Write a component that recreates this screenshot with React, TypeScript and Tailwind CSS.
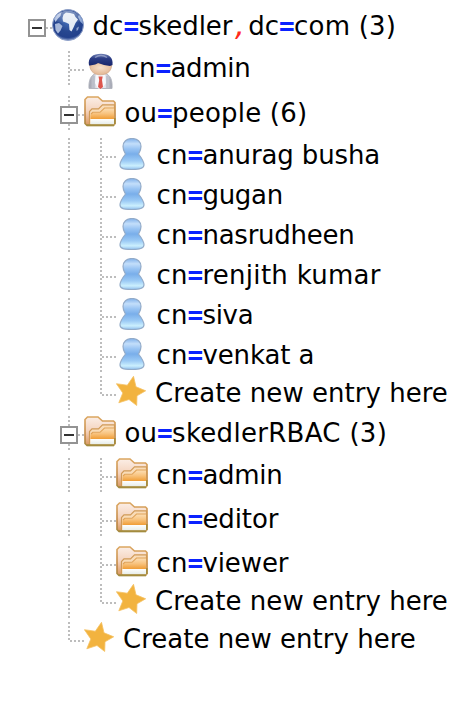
import React from "react";

type Guide = "blank" | "pass" | "branch" | "last" | "rootBox" | "box";
type IconName = "globe" | "person" | "folder" | "user" | "star";

const dots = { stroke: "#bdbdbd", strokeWidth: 2, strokeDasharray: "2 2", fill: "none" };

function GuideCell({ kind }: { kind: Guide }) {
  return (
    <svg className="h-[34px] w-8 shrink-0" viewBox="0 0 32 34">
      {(kind === "pass" || kind === "branch" || kind === "box") && <path d="M17 0V34" {...dots} />}
      {kind === "last" && <path d="M17 0V19" {...dots} />}
      {(kind === "branch" || kind === "last") && <path d="M18 19H32" {...dots} />}
      {(kind === "box" || kind === "rootBox") && (
        <>
          <path d="M26 19H32" {...dots} />
          <rect x="9" y="11" width="16" height="16" fill="#fff" stroke="#939393" strokeWidth="2" />
          <path d="M12 19H22" stroke="#333" strokeWidth="2" />
        </>
      )}
    </svg>
  );
}

function Defs() {
  return (
    <svg className="absolute h-0 w-0">
      <defs>
        <radialGradient id="sea" cx=".5" cy=".35" r=".65">
          <stop offset="0" stopColor="#4a76c0" />
          <stop offset=".55" stopColor="#274790" />
          <stop offset=".85" stopColor="#23418c" />
          <stop offset="1" stopColor="#7d93c4" />
        </radialGradient>
        <linearGradient id="gloss" x1="0" y1="0" x2="0" y2="1">
          <stop offset="0" stopColor="#fff" stopOpacity=".65" />
          <stop offset="1" stopColor="#fff" stopOpacity=".05" />
        </linearGradient>
        <linearGradient id="back" x1="0" y1="0" x2="0" y2="1">
          <stop offset="0" stopColor="#fbeee6" />
          <stop offset=".5" stopColor="#f4d3bd" />
          <stop offset="1" stopColor="#d9965f" />
        </linearGradient>
        <linearGradient id="front" x1="0" y1="0" x2="0" y2="1">
          <stop offset="0" stopColor="#fce0b8" />
          <stop offset=".35" stopColor="#f8c27c" />
          <stop offset=".64" stopColor="#f0a03c" />
          <stop offset=".66" stopColor="#fff" />
          <stop offset="1" stopColor="#e6ece8" />
        </linearGradient>
        <linearGradient id="rim" x1="0" y1="0" x2="0" y2="1">
          <stop offset="0" stopColor="#dba660" />
          <stop offset=".7" stopColor="#c08440" />
          <stop offset="1" stopColor="#a5893f" />
        </linearGradient>
        <linearGradient id="pawn" x1="0" y1="0" x2="0" y2="1">
          <stop offset="0" stopColor="#7fb0ea" />
          <stop offset=".17" stopColor="#c3defa" />
          <stop offset=".32" stopColor="#9cc6f4" />
          <stop offset=".5" stopColor="#79aeea" />
          <stop offset=".72" stopColor="#9bcaf5" />
          <stop offset=".88" stopColor="#cbeffe" />
          <stop offset="1" stopColor="#8fbdec" />
        </linearGradient>
        <linearGradient id="hair" x1="0" y1="0" x2="0" y2="1">
          <stop offset="0" stopColor="#7181b5" />
          <stop offset=".4" stopColor="#2b3c84" />
          <stop offset="1" stopColor="#17256b" />
        </linearGradient>
        <radialGradient id="skin" cx=".5" cy=".4" r=".7">
          <stop offset="0" stopColor="#f6e0cb" />
          <stop offset="1" stopColor="#dfae88" />
        </radialGradient>
        <linearGradient id="coat" x1="0" y1="0" x2="1" y2="0">
          <stop offset="0" stopColor="#9a9daa" />
          <stop offset=".35" stopColor="#e8eaf1" />
          <stop offset=".7" stopColor="#e3e5ed" />
          <stop offset="1" stopColor="#9a9daa" />
        </linearGradient>
      </defs>
    </svg>
  );
}

function Icon({ name }: { name: IconName }) {
  if (name === "globe")
    return (
      <svg className="size-8 shrink-0" viewBox="0 0 32 32">
        <circle cx="16" cy="16" r="15.5" fill="url(#sea)" stroke="#8ea0c8" />
        <path d="M11.5 5.5L14 3.5L18 4L22 5L23.5 8L26 10.5L23.5 14L21.5 18.5L19.5 22.5L17.5 21L17 15L14 13.5L11 12.5L10.5 9Z" fill="#e4ebf5" />
        <path d="M2 10L5 5.5L9.5 3L8.5 7L6 9.5L3.5 13Z" fill="#adbee0" />
        <path d="M3 15L7 14L10.5 17L8.5 21.5L6 24.5L3.5 21Z" fill="#a7b8da" />
        <path d="M27 5.5L30 10L31 15L28.5 13L26 8Z" fill="#8ca6d4" />
        <path d="M24.5 19L27 17.5L26 21L24.5 22Z" fill="#8da2ce" />
        <path d="M3 12C4 5 10 1.5 16 1.5S28 5 29 12C22 15 10 15 3 12Z" fill="url(#gloss)" opacity=".65" />
      </svg>
    );
  if (name === "person")
    return (
      <svg className="mt-0.5 h-9 w-8 shrink-0" viewBox="0 0 32 36">
        <path d="M5 35.5C4.500 27 7 22 12 20.500H21C26.500 22 28.500 27 28 35.5Z" fill="url(#coat)" stroke="#b3b6bf" strokeWidth="1" />
        <path d="M12 20.500H21L22 30L18 35.5H14L11 30Z" fill="#f7f8fc" />
        <path d="M14.500 23.500H18.700L18 27L19 34L16.500 36L14 34L15.200 27Z" fill="#dd564e" />
        <path d="M10 23V35M23 23V35" stroke="#b4b8c4" strokeWidth="1.200" />
        <path d="M6 10H27.500C28.500 17 24 21.800 16.500 21.800S5 17 6 10Z" fill="url(#skin)" stroke="#d2aa8c" strokeWidth=".8" />
        <path d="M5 12.500C3.500 4.500 9 .7 17 .7C24.500 .7 29.500 4 28.500 12L26 13C22 12.500 18 11.500 14 10C12.500 11.500 8 12.500 5 12.500Z" fill="url(#hair)" />
        <path d="M11 4.500Q17 .5 23 4.500" stroke="#a6b0d3" strokeWidth="1.500" fill="none" opacity=".7" />
      </svg>
    );
  if (name === "folder")
    return (
      <svg className="size-8 shrink-0" viewBox="0 0 32 32">
        <path d="M1 3.500L3.500 1H14L18.500 5H29.500L31 6.500V27.500L29.500 29.500H3L1 27.500Z" fill="url(#back)" stroke="url(#rim)" strokeWidth="1.600" />
        <path d="M5.500 28.500V15.500L8 12.800H14.500L18.500 8.800H30.500V28.500Z" fill="#f9dcb8" stroke="#d09a58" strokeWidth="1.200" />
        <path d="M6.500 28.500V18.500L8.500 16.500H16L20.500 12H30V28.500Z" fill="url(#front)" />
        <path d="M7 18L8.800 16.300H16L20.500 12H30" stroke="#dfa258" strokeWidth="1.100" fill="none" />
        <path d="M3 29.200H30" stroke="#a38c3e" strokeWidth="1.800" />
        <path d="M30.800 22V28" stroke="#a38c3e" strokeWidth="1.500" />
      </svg>
    );
  if (name === "user")
    return (
      <svg className="size-8 shrink-0" viewBox="0 0 32 32">
        <path
          d="M16 .5C21.500 .5 25 4 25 8.500C25 12 23.500 14 22.500 16C24.500 18.500 28 23 28 27C28 30.500 24 31.500 16 31.500S4 30.500 4 27C4 23 7.500 18.500 9.500 16C8.500 14 7 12 7 8.500C7 4 10.500 .5 16 .5Z"
          fill="url(#pawn)"
          stroke="#93abc8"
          strokeWidth="1.200"
        />
      </svg>
    );
  return (
    <svg className="h-[30px] w-[30px] shrink-0" viewBox="0 0 30 30">
      <path d="M17.500 .3L20 10.800L29.700 14.800L21 19.800L20.700 29.500L13 23.500L2.800 26.800L6.800 17L.4 7.700L11.300 9.200Z" fill="#f2b33f" stroke="#f5c263" strokeWidth=".8" />
    </svg>
  );
}

const Eq = () => (
  <b className="-mr-[0.6px] font-['DejaVu_Sans_Mono',monospace] text-[26px] tracking-normal text-[#0a22ff]">=</b>
);
const Comma = () => (
  <i className="font-['DejaVu_Sans_Mono',monospace] text-[26px] tracking-normal text-[#ff2a1c]">,</i>
);

type RowProps = { h: string; guides: Guide[]; icon: IconName; children: React.ReactNode };

function Row({ h, guides, icon, children }: RowProps) {
  return (
    <div className={`flex items-start ${h}`}>
      {guides.map((g, i) => (
        <GuideCell key={i} kind={g} />
      ))}
      <Icon name={icon} />
      <span
        className={`whitespace-pre leading-[34px] ${icon === "star" ? "ml-[9px] tracking-[0.03px]" : "ml-[8.6px]"}`}
      >
        {children}
      </span>
    </div>
  );
}

const people = [
  { name: "anurag busha", h: "h-10", tracking: "tracking-[-0.13px]" },
  { name: "gugan", h: "h-10", tracking: "tracking-[-0.3px]" },
  { name: "nasrudheen", h: "h-10", tracking: "tracking-[-0.25px]" },
  { name: "renjith kumar", h: "h-10", tracking: "tracking-[0.28px]" },
  { name: "siva", h: "h-10", tracking: "tracking-[-0.3px]" },
  { name: "venkat a", h: "h-[38px]", tracking: "tracking-[-0.1px]" },
];

const roles = [
  { name: "admin", h: "h-11", tracking: "tracking-[-0.3px]" },
  { name: "editor", h: "h-11", tracking: "tracking-[-0.1px]" },
  { name: "viewer", h: "h-[38px]", tracking: "tracking-[-0.1px]" },
];

export default function App() {
  return (
    <div className="h-[712px] w-[468px] overflow-hidden bg-white pl-5 pt-[9px] font-['DejaVu_Sans',sans-serif] text-[26px] text-black">
      <Defs />
      <Row h="h-[42px]" guides={["rootBox"]} icon="globe">
        dc<Eq />skedler<Comma />dc<Eq /><span className="tracking-[0.2px]">com (3)</span>
      </Row>
      <Row h="h-[45px]" guides={["blank", "branch"]} icon="person">
        cn<Eq /><span className="tracking-[-0.3px]">admin</span>
      </Row>
      <Row h="h-[42px]" guides={["blank", "box"]} icon="folder">
        ou<Eq /><span className="tracking-[0.2px]">people (6)</span>
      </Row>
      {people.map((p) => (
        <Row key={p.name} h={p.h} guides={["blank", "pass", "branch"]} icon="user">
          cn<Eq /><span className={p.tracking}>{p.name}</span>
        </Row>
      ))}
      <Row h="h-10" guides={["blank", "pass", "last"]} icon="star">
        Create new entry here
      </Row>
      <Row h="h-[42px]" guides={["blank", "box"]} icon="folder">
        ou<Eq /><span className="tracking-[0.3px]">skedlerRBAC (3)</span>
      </Row>
      {roles.map((r) => (
        <Row key={r.name} h={r.h} guides={["blank", "pass", "branch"]} icon="folder">
          cn<Eq /><span className={r.tracking}>{r.name}</span>
        </Row>
      ))}
      <Row h="h-[38px]" guides={["blank", "pass", "last"]} icon="star">
        Create new entry here
      </Row>
      <Row h="h-[38px]" guides={["blank", "last"]} icon="star">
        Create new entry here
      </Row>
    </div>
  );
}
